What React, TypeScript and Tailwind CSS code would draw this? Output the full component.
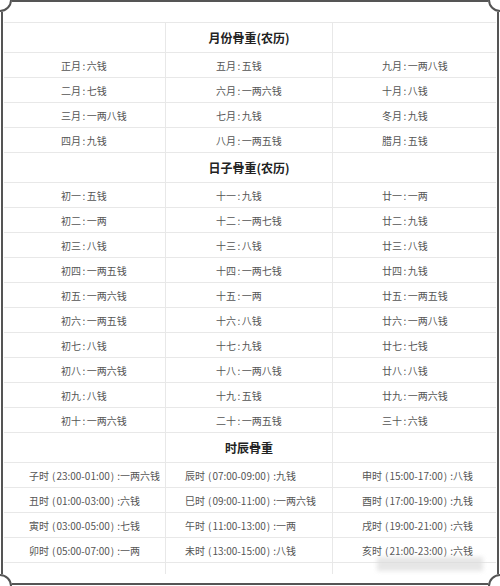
import React from "react";

const s1: string[][] = [
  ["正月:六钱", "五月:五钱", "九月:一两八钱"],
  ["二月:七钱", "六月:一两六钱", "十月:八钱"],
  ["三月:一两八钱", "七月:九钱", "冬月:九钱"],
  ["四月:九钱", "八月:一两五钱", "腊月:五钱"],
];

const s2: string[][] = [
  ["初一:五钱", "十一:九钱", "廿一:一两"],
  ["初二:一两", "十二:一两七钱", "廿二:九钱"],
  ["初三:八钱", "十三:八钱", "廿三:八钱"],
  ["初四:一两五钱", "十四:一两七钱", "廿四:九钱"],
  ["初五:一两六钱", "十五:一两", "廿五:一两五钱"],
  ["初六:一两五钱", "十六:八钱", "廿六:一两八钱"],
  ["初七:八钱", "十七:九钱", "廿七:七钱"],
  ["初八:一两六钱", "十八:一两八钱", "廿八:八钱"],
  ["初九:八钱", "十九:五钱", "廿九:一两六钱"],
  ["初十:一两六钱", "二十:一两五钱", "三十:六钱"],
];

const s3: string[][] = [
  ["子时(23:00-01:00):一两六钱", "辰时(07:00-09:00):九钱", "申时(15:00-17:00):八钱"],
  ["丑时(01:00-03:00):六钱", "巳时(09:00-11:00):一两六钱", "酉时(17:00-19:00):九钱"],
  ["寅时(03:00-05:00):七钱", "午时(11:00-13:00):一两", "戌时(19:00-21:00):六钱"],
  ["卯时(05:00-07:00):一两", "未时(13:00-15:00):八钱", "亥时(21:00-23:00):六钱"],
];

function Txt({ t, wide }: { t: string; wide: boolean }) {
  const i = t.lastIndexOf(":");
  const a = t.slice(0, i);
  const b = t.slice(i + 1);
  if (wide) {
    return (
      <span className="whitespace-nowrap">
        {a}
        <span className="mx-[1.5px]">:</span>
        {b}
      </span>
    );
  }
  const p = a.indexOf("(");
  const q = a.indexOf(")");
  return (
    <span className="whitespace-nowrap">
      {a.slice(0, p)}
      <span className="ml-[3px] mr-[1px]">(</span>
      {a.slice(p + 1, q)}
      <span className="ml-[1px] mr-[3px]">)</span>
      :{b}
    </span>
  );
}

function Header({ title }: { title: string }) {
  return (
    <div className="grid grid-cols-[162px_167px_163px] h-[30px] border-b border-[#e8e8e8]">
      <div className="border-r border-[#e8e8e8]" />
      <div className="border-r border-[#e8e8e8] flex items-center justify-center text-[12px] font-bold text-[#222]">
        {title}
      </div>
      <div />
    </div>
  );
}

function Rows({ rows, pads, wide }: { rows: string[][]; pads: string[]; wide: boolean }) {
  return (
    <>
      {rows.map((r, ri) => (
        <div key={ri} className="grid grid-cols-[162px_167px_163px] h-[25px] border-b border-[#e8e8e8] text-[10px] text-[#555]">
          <div className={`border-r border-[#e8e8e8] flex items-center ${pads[0]}`}>
            <Txt t={r[0]} wide={wide} />
          </div>
          <div className={`border-r border-[#e8e8e8] flex items-center ${pads[1]}`}>
            <Txt t={r[1]} wide={wide} />
          </div>
          <div className={`flex items-center ${pads[2]}`}>
            <Txt t={r[2]} wide={wide} />
          </div>
        </div>
      ))}
    </>
  );
}

function Corner({ pos }: { pos: "tl" | "tr" | "bl" | "br" }) {
  const box =
    pos === "tl"
      ? "top-0 left-0"
      : pos === "tr"
      ? "top-0 right-0"
      : pos === "bl"
      ? "bottom-0 left-0"
      : "bottom-0 right-0";
  const circ =
    pos === "tl"
      ? "-top-[12px] -left-[12px]"
      : pos === "tr"
      ? "-top-[12px] -right-[12px]"
      : pos === "bl"
      ? "-bottom-[12px] -left-[12px]"
      : "-bottom-[12px] -right-[12px]";
  return (
    <div className={`absolute ${box} w-[12px] h-[12px] bg-white overflow-hidden`}>
      <div className={`absolute ${circ} w-[24px] h-[24px] rounded-full border-2 border-[#555]`} />
    </div>
  );
}

export default function App() {
  return (
    <div className="relative w-[500px] h-[586px] bg-white overflow-hidden font-['Noto_Sans_CJK_SC','Noto_Sans',sans-serif]">
      <div className="absolute left-[1px] top-0 w-[498px] h-[585px] border-2 border-[#555] bg-white">
        <div className="pt-[20px] pl-[1px]">
          <div className="w-[492px] border-t border-[#e8e8e8]">
            <Header title="月份骨重(农历)" />
            <Rows rows={s1} pads={["pl-[57px]", "pl-[50px]", "pl-[49px]"]} wide />
            <Header title="日子骨重(农历)" />
            <Rows rows={s2} pads={["pl-[57px]", "pl-[50px]", "pl-[49px]"]} wide />
            <Header title="时辰骨重" />
            <Rows rows={s3} pads={["pl-[25px]", "pl-[19px]", "pl-[29px]"]} wide={false} />
            <div className="grid grid-cols-[162px_167px_163px] h-[11px]">
              <div className="border-r border-[#e8e8e8]" />
              <div className="border-r border-[#e8e8e8]" />
              <div />
            </div>
          </div>
        </div>
      </div>
      <div className="absolute left-[377px] top-[557px] w-[106px] h-[14px] bg-[#dcdcdc] opacity-70 blur-[2px]" />
      <Corner pos="tl" />
      <Corner pos="tr" />
      <Corner pos="bl" />
      <Corner pos="br" />
    </div>
  );
}
